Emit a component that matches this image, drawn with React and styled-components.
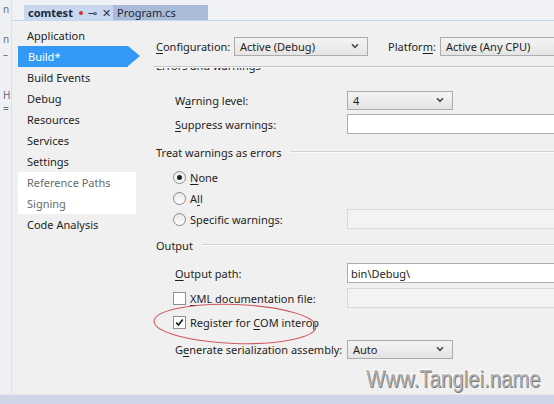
import React from "react";
import styled, { createGlobalStyle } from "styled-components";

const GlobalStyle = createGlobalStyle`
  html, body { margin: 0; padding: 0; }
  body {
    background: #f0f0f0;
    font-family: "Noto Sans", "Open Sans", sans-serif;
    color: #1e1e1e;
  }
`;

const Frame = styled.div`
  position: relative;
  width: 554px;
  height: 404px;
  overflow: hidden;
  display: flex;
  flex-direction: column;
  background: #f0f0f0;
`;

const Upper = styled.div`
  flex: 1;
  display: flex;
  min-height: 0;
`;

const Strip = styled.div`
  flex: none;
  width: 11px;
  background: #eef0f4;
  border-right: 1px solid #dde1e8;
  display: flex;
  flex-direction: column;
  overflow: hidden;
  font-size: 10px;
  color: #6b6f78;
`;

const StripGlyph = styled.span`
  display: block;
  margin-top: ${(p) => p.$mt}px;
  padding-left: 3px;
  line-height: 11px;
`;

const Main = styled.div`
  flex: 1;
  display: flex;
  flex-direction: column;
  min-width: 0;
`;

const TabBar = styled.div`
  height: 20px;
  display: flex;
  align-items: flex-end;
  padding-left: 12px;
  border-bottom: 1px solid #c6d6ec;
  background: #eff1f4;
`;

const Tab = styled.div`
  height: 15px;
  width: ${(p) => p.$w}px;
  display: flex;
  align-items: center;
  gap: 5px;
  padding-left: ${(p) => p.$pl}px;
  box-sizing: border-box;
  background: ${(p) => (p.$active ? "#c9d8ee" : "#a9bbd6")};
  font-size: 11px;
  font-weight: ${(p) => (p.$active ? 700 : 400)};
  color: #1b2840;
  white-space: nowrap;
`;

const Dot = styled.span`
  width: 4px;
  height: 4px;
  border-radius: 50%;
  background: #c0392b;
  margin-left: 1px;
`;

const TabIcon = styled.span`
  font-size: 11px;
  font-weight: 400;
  color: #2a3550;
  line-height: 1;
`;

const Body = styled.div`
  flex: 1;
  display: flex;
  min-height: 0;
`;

const Nav = styled.div`
  flex: none;
  width: 118px;
  margin-left: 6px;
  padding-top: 4px;
  display: flex;
  flex-direction: column;
`;

const NavItem = styled.div`
  position: relative;
  height: 21px;
  line-height: 21px;
  padding-left: ${(p) => (p.$selected ? 10 : 9)}px;
  font-size: 11px;
  width: ${(p) => (p.$selected ? "110px" : "auto")};
  box-sizing: border-box;
  background: ${(p) => (p.$selected ? "#3399f7" : p.$muted ? "#ffffff" : "transparent")};
  color: ${(p) => (p.$selected ? "#ffffff" : p.$muted ? "#6a6a6a" : "#1e1e1e")};
  &::after {
    content: "";
    display: ${(p) => (p.$selected ? "block" : "none")};
    position: absolute;
    right: -12px;
    top: 0;
    border-left: 12px solid #3399f7;
    border-top: 10.5px solid transparent;
    border-bottom: 10.5px solid transparent;
  }
`;

const Content = styled.div`
  flex: 1;
  min-width: 0;
  padding-left: 17px;
  display: flex;
  flex-direction: column;
`;

const ConfigRow = styled.div`
  margin-top: 15px;
  height: 20px;
  display: flex;
  align-items: center;
  padding-left: 3px;
  font-size: 11px;
  white-space: nowrap;
`;

const ConfigLabel = styled.span`
  flex: none;
  width: ${(p) => p.$w}px;
  margin-left: ${(p) => p.$ml || 0}px;
`;

const Separator = styled.div`
  margin-top: 10px;
  border-top: 1px solid #c6c6c6;
  border-bottom: 1px solid #fafafa;
`;

const Viewport = styled.div`
  flex: 1;
  overflow: hidden;
  min-height: 0;
`;

const Scroller = styled.div`
  display: flex;
  flex-direction: column;
`;

const SectionHeader = styled.div`
  margin-top: ${(p) => p.$mt}px;
  height: 16px;
  display: flex;
  align-items: center;
  padding-left: 3px;
  font-size: 11px;
  white-space: nowrap;
  &::after {
    content: "";
    flex: 1;
    margin-left: 9px;
    border-top: 1px solid #d2d2d2;
    border-bottom: 1px solid #fbfbfb;
  }
`;

const Row = styled.div`
  margin-top: ${(p) => p.$mt}px;
  height: 20px;
  display: flex;
  align-items: center;
  font-size: 11px;
  white-space: nowrap;
`;

const FieldLabel = styled.span`
  flex: none;
  width: 194px;
  box-sizing: border-box;
  padding-left: 22px;
`;

const CheckLabel = styled.label`
  flex: none;
  width: 194px;
  box-sizing: border-box;
  padding-left: 20px;
  display: flex;
  align-items: center;
  gap: 4px;
`;

const Radio = styled.span`
  width: 11px;
  height: 11px;
  border-radius: 50%;
  border: 1px solid #8b8b8b;
  background: linear-gradient(#e8e8e8, #fdfdfd);
  display: flex;
  align-items: center;
  justify-content: center;
  &::after {
    content: "";
    width: 5px;
    height: 5px;
    border-radius: 50%;
    background: #222;
    display: ${(p) => (p.$on ? "block" : "none")};
  }
`;

const Check = styled.span`
  width: 11px;
  height: 11px;
  border: 1px solid #8e8f8f;
  background: #fff;
  display: flex;
  align-items: center;
  justify-content: center;
`;

const Select = styled.div`
  flex: none;
  width: ${(p) => p.$w}px;
  height: 19px;
  box-sizing: border-box;
  border: 1px solid #acacac;
  background: linear-gradient(#f4f4f4, #e4e4e4);
  display: flex;
  align-items: center;
  justify-content: space-between;
  padding: 0 8px 0 5px;
  font-size: 11px;
  color: #1e1e1e;
`;

const Input = styled.div`
  flex: none;
  width: 230px;
  height: 20px;
  box-sizing: border-box;
  border: 1px solid ${(p) => (p.$disabled ? "#d8d8d8" : "#abadb3")};
  background: ${(p) => (p.$disabled ? "#f3f3f3" : "#ffffff")};
  display: flex;
  align-items: center;
  padding-left: 3px;
  font-size: 11px;
`;

const U = styled.span`
  text-decoration: underline;
  text-underline-offset: 2px;
`;

const BottomBar = styled.div`
  flex: none;
  height: 9px;
  background: #d1d5e8;
  border-top: 1px solid #e6e8f1;
`;

const Watermark = styled.div`
  position: absolute;
  left: 366px;
  top: 366px;
  font-family: "Liberation Sans", Arial, sans-serif;
  font-size: 24px;
  line-height: 26px;
  color: #b0b0b0;
  text-shadow: 1px 1px 0 #767676, -1px -1px 0 #ffffff;
  transform: scaleX(0.85);
  transform-origin: left center;
  white-space: nowrap;
`;

const Ellipse = styled.svg`
  position: absolute;
  left: 152px;
  top: 303px;
  overflow: visible;
`;

const Chevron = () => (
  <svg width="8" height="6" viewBox="0 0 8 6">
    <path d="M1 1.2 L4 4.4 L7 1.2" fill="none" stroke="#4a4a4a" strokeWidth="1.6" />
  </svg>
);

const Tick = () => (
  <svg width="9" height="9" viewBox="0 0 9 9">
    <path d="M1.2 4.6 L3.5 7 L7.8 1.5" fill="none" stroke="#1e1e1e" strokeWidth="1.7" />
  </svg>
);

const navItems = [
  { label: "Application" },
  { label: "Build*", selected: true },
  { label: "Build Events" },
  { label: "Debug" },
  { label: "Resources" },
  { label: "Services" },
  { label: "Settings" },
  { label: "Reference Paths", muted: true },
  { label: "Signing", muted: true },
  { label: "Code Analysis" },
];

export default function App() {
  return (
    <>
      <GlobalStyle />
      <Frame>
        <Upper>
          <Strip>
            <StripGlyph $mt={4}>n</StripGlyph>
            <StripGlyph $mt={19}>n</StripGlyph>
            <StripGlyph $mt={4}>–</StripGlyph>
            <StripGlyph $mt={30}>H</StripGlyph>
            <StripGlyph $mt={2}>=</StripGlyph>
          </Strip>
          <Main>
            <TabBar>
              <Tab $active $w={89} $pl={4}>
                comtest
                <Dot />
                <TabIcon>⊸</TabIcon>
                <TabIcon>✕</TabIcon>
              </Tab>
              <Tab $w={95} $pl={4}>Program.cs</Tab>
            </TabBar>
            <Body>
              <Nav>
                {navItems.map((it) => (
                  <NavItem key={it.label} $selected={it.selected} $muted={it.muted}>
                    {it.label}
                  </NavItem>
                ))}
              </Nav>
              <Content>
                <ConfigRow>
                  <ConfigLabel $w={78}>
                    <U>C</U>onfiguration:
                  </ConfigLabel>
                  <Select $w={134}>
                    Active (Debug)
                    <Chevron />
                  </Select>
                  <ConfigLabel $w={52} $ml={20}>
                    Platfor<U>m</U>:
                  </ConfigLabel>
                  <Select $w={140}>Active (Any CPU)</Select>
                </ConfigRow>
                <Separator />
                <Viewport>
                  <Scroller>
                    <SectionHeader $mt={-11}>Errors and warnings</SectionHeader>
                    <Row $mt={17}>
                      <FieldLabel>
                        W<U>a</U>rning level:
                      </FieldLabel>
                      <Select $w={106}>
                        4
                        <Chevron />
                      </Select>
                    </Row>
                    <Row $mt={4}>
                      <FieldLabel>
                        <U>S</U>uppress warnings:
                      </FieldLabel>
                      <Input />
                    </Row>
                    <SectionHeader $mt={10}>Treat warnings as errors</SectionHeader>
                    <Row $mt={7}>
                      <CheckLabel>
                        <Radio $on />
                        <span>
                          <U>N</U>one
                        </span>
                      </CheckLabel>
                    </Row>
                    <Row $mt={1}>
                      <CheckLabel>
                        <Radio />
                        <span>
                          A<U>l</U>l
                        </span>
                      </CheckLabel>
                    </Row>
                    <Row $mt={1}>
                      <CheckLabel>
                        <Radio />
                        <span>
                          Specif<U>i</U>c warnings:
                        </span>
                      </CheckLabel>
                      <Input $disabled />
                    </Row>
                    <SectionHeader $mt={8}>Output</SectionHeader>
                    <Row $mt={10}>
                      <FieldLabel>
                        <U>O</U>utput path:
                      </FieldLabel>
                      <Input>bin\Debug\</Input>
                    </Row>
                    <Row $mt={5}>
                      <CheckLabel>
                        <Check />
                        <span>
                          <U>X</U>ML documentation file:
                        </span>
                      </CheckLabel>
                      <Input $disabled />
                    </Row>
                    <Row $mt={4}>
                      <CheckLabel>
                        <Check>
                          <Tick />
                        </Check>
                        <span>
                          Register for <U>C</U>OM interop
                        </span>
                      </CheckLabel>
                    </Row>
                    <Row $mt={7}>
                      <FieldLabel>
                        G<U>e</U>nerate serialization assembly:
                      </FieldLabel>
                      <Select $w={106}>
                        Auto
                        <Chevron />
                      </Select>
                    </Row>
                  </Scroller>
                </Viewport>
              </Content>
            </Body>
          </Main>
        </Upper>
        <BottomBar />
        <Ellipse width="166" height="44" viewBox="0 0 166 44">
          <ellipse cx="83" cy="21" rx="81" ry="19.5" fill="none" stroke="#cf5a5e" strokeWidth="1.1" transform="rotate(2 83 21)" />
        </Ellipse>
        <Watermark>Www.Tanglei.name</Watermark>
      </Frame>
    </>
  );
}
